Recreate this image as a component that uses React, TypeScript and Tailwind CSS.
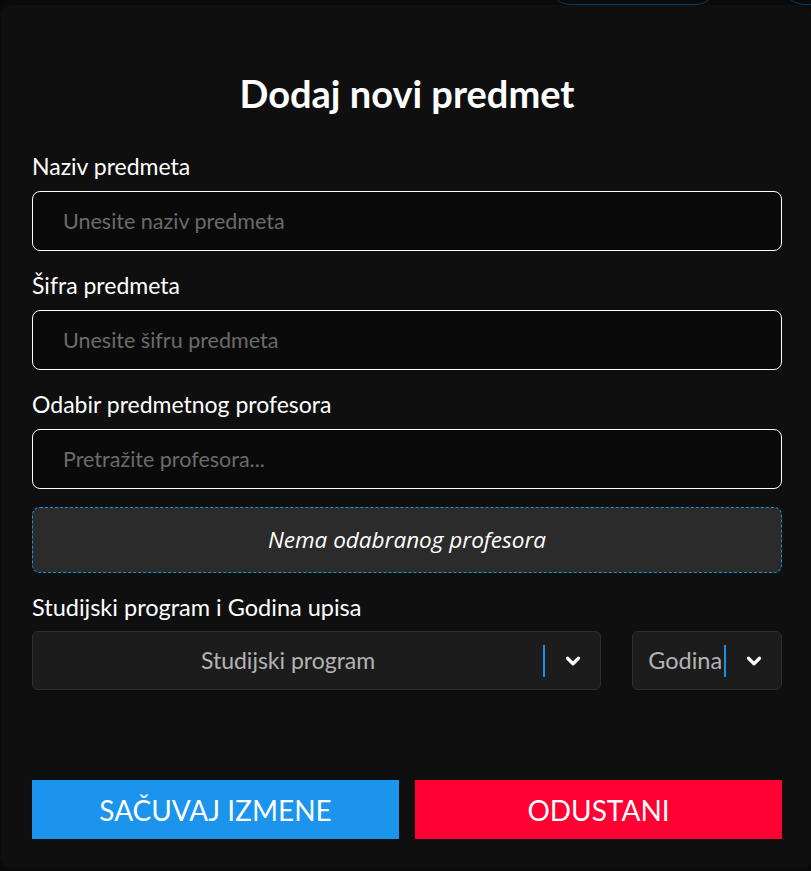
import { ChevronDown } from "lucide-react";

const font = { fontFamily: "Lato, 'Noto Sans', sans-serif" };

function Field({ label, placeholder, top }: { label: string; placeholder: string; top: string }) {
  return (
    <div className={`flex flex-col ${top}`}>
      <label className="text-[23px] leading-[24px] text-white">{label}</label>
      <input
        placeholder={placeholder}
        className="mt-[13px] h-[60px] w-full rounded-lg border border-white bg-[#0a0a0a] px-[30px] text-[21.5px] text-white outline-none placeholder:text-[#6b6b6b]"
      />
    </div>
  );
}

export default function App() {
  return (
    <div className="relative h-[871px] w-[811px] overflow-hidden bg-[#0a0a0a] pt-[5px] pl-[1px]" style={font}>
      {/* page behind the modal peeks out at the top */}
      <div className="absolute left-[548px] top-[-40px] h-[45px] w-[170px] rounded-full border border-[#0b3a63]" />
      <div className="absolute left-[782px] top-[-40px] h-[45px] w-[100px] rounded-full border border-[#0b3a63]" />

      <div className="relative flex h-[863px] w-[812px] flex-col rounded-[10px] bg-[#0f0f0f] px-[31px] pt-[68px]">
        <h2 className="text-center text-[38px] font-bold leading-[40px] text-white">Dodaj novi predmet</h2>

        <Field label="Naziv predmeta" placeholder="Unesite naziv predmeta" top="mt-[41px]" />
        <Field label="Šifra predmeta" placeholder="Unesite šifru predmeta" top="mt-[22px]" />
        <Field label="Odabir predmetnog profesora" placeholder="Pretražite profesora..." top="mt-[22px]" />

        <div className="mt-[18px] flex h-[66px] items-center justify-center rounded-lg border border-dashed border-[#1a8fe6] bg-[#2b2b2b]">
          <span className="text-[22.5px] italic text-white" style={{ fontFamily: "'Open Sans', sans-serif" }}>
            Nema odabranog profesora
          </span>
        </div>

        <div className="mt-[22px] text-[23.5px] leading-[24px] text-white">Studijski program i Godina upisa</div>

        <div className="mt-[12px] flex gap-[31px]">
          <div className="flex h-[59px] w-[570px] items-center rounded-md border border-[#2e2e2e] bg-[#1c1c1c]">
            <span className="flex-1 text-center text-[23px] text-[#b3b3b3]">Studijski program</span>
            <span className="h-[32px] w-[2px] bg-[#1a8fe6]" />
            <span className="flex w-[55px] justify-center text-white">
              <ChevronDown size={22} strokeWidth={3.5} />
            </span>
          </div>
          <div className="flex h-[59px] w-[150px] items-center rounded-md border border-[#2e2e2e] bg-[#1c1c1c] pl-[15px]">
            <span className="text-[23.5px] text-[#b3b3b3]">Godina</span>
            <span className="ml-[2px] h-[32px] w-[2px] bg-[#1a8fe6]" />
            <span className="flex flex-1 justify-center text-white">
              <ChevronDown size={22} strokeWidth={3.5} />
            </span>
          </div>
        </div>

        <div className="mt-[90px] flex gap-[16px]">
          <button className="h-[59px] flex-1 bg-[#1b94ee] text-[28px] uppercase text-white">Sačuvaj izmene</button>
          <button className="h-[59px] flex-1 bg-[#ff0033] text-[28px] uppercase text-white">Odustani</button>
        </div>
      </div>
    </div>
  );
}
